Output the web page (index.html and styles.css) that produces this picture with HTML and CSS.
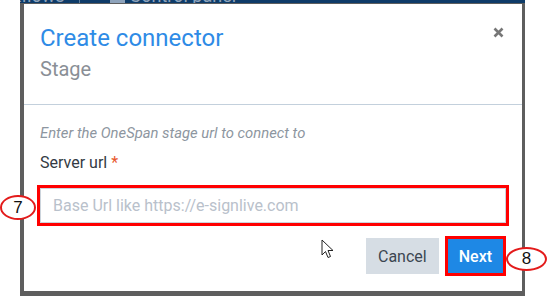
FILE: index.html
```html
<!DOCTYPE html>
<html lang="en">
<head>
    <meta charset="UTF-8">
    <meta name="viewport" content="width=device-width, initial-scale=1.0">
    <title>Create connector</title>
    <link rel="stylesheet" href="styles.css">
</head>
<body>
    <div class="screen">
        <div class="appbar">
            <span class="appbar-item">Workflows</span>
            <span class="appbar-sep"></span>
            <span class="appbar-item"><span class="appbar-icon"></span>Control panel</span>
        </div>

        <div class="modal">
            <div class="modal-header">
                <div class="modal-titles">
                    <div class="modal-title">Create connector</div>
                    <div class="modal-subtitle">Stage</div>
                </div>
                <svg class="modal-close" width="11" height="11" viewBox="0 0 11 11">
                    <path d="M1.5 1.5 L9.5 9.5 M9.5 1.5 L1.5 9.5" stroke="#777" stroke-width="2.6"/>
                </svg>
            </div>

            <div class="modal-body">
                <p class="hint">Enter the OneSpan stage url to connect to</p>
                <label class="field-label" for="serverUrl">Server url <span class="required">*</span></label>
                <input type="text" id="serverUrl" class="field-input" placeholder="Base Url like https://e-signlive.com">
            </div>

            <div class="modal-footer">
                <button class="btn btn-cancel">Cancel</button>
                <button class="btn btn-next">Next</button>
            </div>
        </div>
    </div>

    <!-- annotations on top of the screenshot -->
    <span class="step step-7">7</span>
    <span class="step step-8">8</span>
    <svg class="cursor" width="13" height="20" viewBox="0 0 13 20">
        <path d="M1 1 L1 16 L4.5 12.5 L7 18.5 L9.5 17.5 L7 11.5 L12 11.5 Z" fill="#fff" stroke="#222" stroke-width="1"/>
    </svg>
</body>
</html>
```

FILE: styles.css
```css
body {
    margin: 0;
    background: #fff;
    font-family: Roboto, "Liberation Sans", sans-serif;
    position: relative;
    width: 553px;
    height: 296px;
    overflow: hidden;
}
.screen {
    margin-left: 20px;
    width: 505px;
    height: 296px;
    background: #5e5e5e;
    display: flex;
    flex-direction: column;
}
.appbar {
    height: 3px;
    flex: none;
    background: #0e3b68;
    overflow: hidden;
    display: flex;
    align-items: flex-end;
    color: #8ea3bb;
    font-size: 18px;
    line-height: 15px;
    white-space: nowrap;
}
.appbar-item {
    display: flex;
    align-items: flex-end;
}
.appbar-item:first-child {
    margin-left: -40px;
}
.appbar-sep {
    width: 1px;
    height: 10px;
    background: #5d7c9c;
    margin: 0 30px 0 14px;
}
.appbar-icon {
    width: 15px;
    height: 12px;
    background: #8ea3bb;
    margin-right: 5px;
}
.modal {
    margin: 1px 3px 0 4px;
    height: 287px;
    background: #fff;
    display: flex;
    flex-direction: column;
}
.modal-header {
    display: flex;
    justify-content: space-between;
    align-items: flex-start;
    padding: 20px 16px 23px 16px;
    border-bottom: 1px solid #c3d0dc;
}
.modal-title {
    color: #2e8be6;
    font-size: 24px;
    line-height: 28px;
}
.modal-subtitle {
    color: #8a8f96;
    font-size: 20px;
    line-height: 24px;
    margin-top: 5px;
}
.modal-close {
    margin-top: 3px;
    margin-right: 2px;
}
.modal-body {
    padding: 18px 16px 0 16px;
}
.hint {
    margin: 0;
    color: #8d96a0;
    font-size: 14.8px;
    font-style: italic;
    line-height: 20px;
}
.field-label {
    display: block;
    margin-top: 10px;
    color: #333a44;
    font-size: 16px;
    line-height: 20px;
}
.required {
    color: #e8572d;
}
.field-input {
    display: block;
    box-sizing: border-box;
    width: 100%;
    height: 35px;
    margin-top: 15px;
    padding: 0 12px;
    border: 1px solid #ccd4dc;
    font-family: Roboto, "Liberation Sans", sans-serif;
    font-size: 16px;
    outline: 3px solid #f00;
}
.field-input::placeholder {
    color: #b9c1cb;
}
.modal-footer {
    display: flex;
    justify-content: flex-end;
    gap: 8px;
    padding: 15px 18px 0 16px;
}
.btn {
    height: 36px;
    padding: 0 12px;
    border: none;
    font-family: Roboto, "Liberation Sans", sans-serif;
    font-size: 16px;
}
.btn-cancel {
    background: #d6dde4;
    color: #3c4651;
}
.btn-next {
    background: #1e88e5;
    color: #fff;
    font-weight: 500;
    outline: 3px solid #f00;
    outline-offset: -1px;
}
.step {
    position: absolute;
    box-sizing: border-box;
    border: 2px solid #e31b1b;
    border-radius: 50%;
    background: #fff;
    color: #111;
    font-family: "Liberation Sans", sans-serif;
    font-size: 17px;
    display: flex;
    align-items: center;
    justify-content: center;
}
.step-7 {
    left: 0;
    top: 195px;
    width: 36px;
    height: 25px;
}
.step-8 {
    left: 506px;
    top: 247px;
    width: 41px;
    height: 24px;
}
.cursor {
    position: absolute;
    left: 321px;
    top: 239px;
}
```
